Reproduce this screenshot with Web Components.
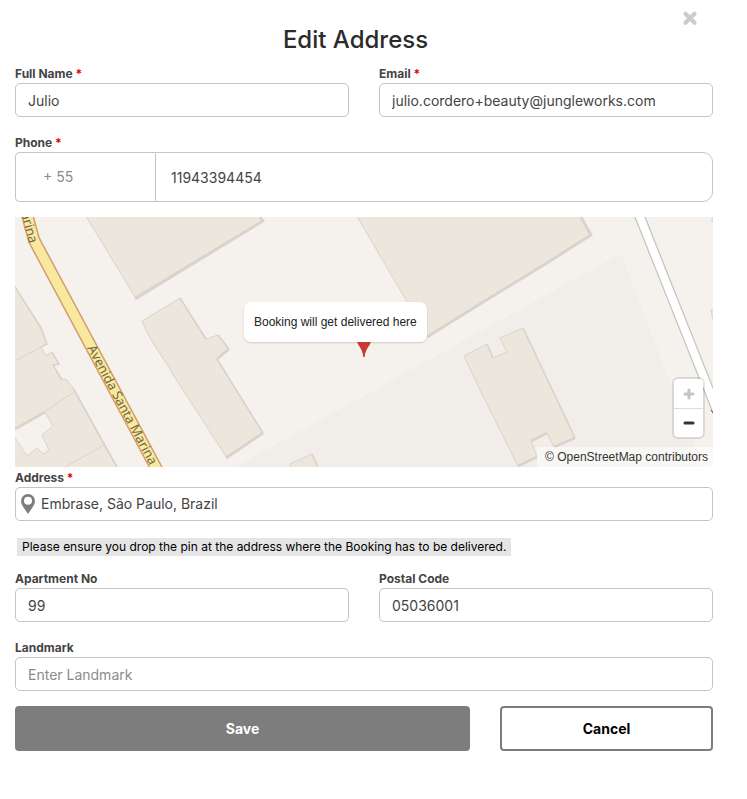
<!DOCTYPE html>
<html lang="en">
<head>
<meta charset="utf-8">
<meta name="viewport" content="width=device-width, initial-scale=1">
<title>Edit Address</title>
<style>
  body { margin: 0; background: #fff; color: #444; font: 14px/20px Inter, "Liberation Sans", sans-serif; }
</style>
</head>
<body>
<address-dialog heading="Edit Address">
  <field-row>
    <form-field label="Full Name" required value="Julio"></form-field>
    <form-field label="Email" type="email" required value="julio.cordero+beauty@jungleworks.com"></form-field>
  </field-row>
  <phone-field label="Phone" required code="+ 55" value="11943394454"></phone-field>
  <map-section>
    <delivery-map>Booking will get delivered here</delivery-map>
    <form-field label="Address" required value="Embrase, São Paulo, Brazil">
      <pin-icon slot="icon"></pin-icon>
    </form-field>
  </map-section>
  <hint-note>Please ensure you drop the pin at the address where the Booking has to be delivered.</hint-note>
  <field-row>
    <form-field label="Apartment No" value="99"></form-field>
    <form-field label="Postal Code" value="05036001"></form-field>
  </field-row>
  <form-field label="Landmark" placeholder="Enter Landmark"></form-field>
  <action-bar>
    <action-button variant="primary">Save</action-button>
    <action-button variant="outline">Cancel</action-button>
  </action-bar>
</address-dialog>

<script>
const define = (name, render) => customElements.define(name, class extends HTMLElement {
  constructor() { super(); this.attachShadow({ mode: "open" }); }
  connectedCallback() { this.shadowRoot.innerHTML = render(this); }
});
const attr = (el, name) => el.getAttribute(name) || "";
const star = el => el.hasAttribute("required") ? ' <span class="star">*</span>' : "";
const fieldStyles = `
  * { box-sizing: border-box; }
  label { display: block; font-size: 12px; line-height: 16px; font-weight: 700; margin-bottom: 1px; }
  .star { color: #e60000; }
  input { font: inherit; color: inherit; background: none; outline: none; min-width: 0; margin: 0; }
  input::placeholder { color: #8c8c8c; opacity: 1; }
`;

define("address-dialog", el => `
  <style>
    :host { display: block; position: relative; padding: 25px 34px 48px 15px; }
    h1 { margin: 0 17px 11px 0; font-size: 24px; line-height: 30px; font-weight: 500; color: #2b2b2d; text-align: center; }
    .close { position: absolute; top: 10px; right: 49px; width: 16px; height: 16px; padding: 0; border: 0; background: none; }
    .close svg { display: block; }
    form { display: flex; flex-direction: column; }
    ::slotted(*) { margin-bottom: 18px; }
    ::slotted(phone-field) { margin-bottom: 15px; }
    ::slotted(map-section) { margin-bottom: 17px; }
    ::slotted(hint-note) { margin-bottom: 15px; }
    ::slotted(form-field) { margin-bottom: 15px; }
    ::slotted(action-bar) { margin-bottom: 0; }
  </style>
  <button class="close" type="button" aria-label="Close">
    <svg width="16" height="16" viewBox="0 0 16 16"><path d="M3.5 3.8l9 9M12.5 3.8l-9 9" stroke="#ccc" stroke-width="4.2" stroke-linecap="round"/></svg>
  </button>
  <h1>${attr(el, "heading")}</h1>
  <form><slot></slot></form>`);

define("field-row", () => `
  <style>:host { display: grid; grid-template-columns: 1fr 1fr; gap: 30px; }</style><slot></slot>`);

define("map-section", () => `
  <style>:host { display: flex; flex-direction: column; gap: 3px; }</style><slot></slot>`);

define("form-field", el => `
  <style>${fieldStyles}
    :host { display: block; min-width: 0; }
    .box { display: flex; align-items: center; height: 34px; border: 1px solid #c4c4c4; border-radius: 5px; }
    input { flex: 1; height: 32px; border: 0; padding: 0 12px; }
    .iconed input { padding: 0 12px 2px 5px; }
    ::slotted([slot=icon]) { margin-left: 4px; }
  </style>
  <label for="field">${attr(el, "label")}${star(el)}</label>
  <div class="box ${el.querySelector("[slot=icon]") ? "iconed" : ""}">
    <slot name="icon"></slot>
    <input id="field" type="${attr(el, "type") || "text"}" value="${attr(el, "value")}" placeholder="${attr(el, "placeholder")}">
  </div>`);

define("phone-field", el => `
  <style>${fieldStyles}
    :host { display: block; }
    .box { display: grid; grid-template-columns: 140px 1fr; height: 50px; }
    input { border: 1px solid #c4c4c4; padding: 2px 15px 0; border-radius: 0 10px 10px 0; }
    .code { border-right: 0; border-radius: 5px 0 0 5px; padding: 0 12px 0 27px; color: #8c8c8c; }
  </style>
  <label for="number">${attr(el, "label")}${star(el)}</label>
  <div class="box">
    <input class="code" aria-label="Country code" value="${attr(el, "code")}">
    <input id="number" type="tel" value="${attr(el, "value")}">
  </div>`);

define("pin-icon", () => `
  <style>:host { display: block; width: 16px; height: 20px; } svg { display: block; }</style>
  <svg width="16" height="20" viewBox="0 0 16 20"><path fill="#7d7d7d" fill-rule="evenodd" d="M8 0a7 7 0 0 0-7 7c0 4.700 4.500 8.500 7 13 2.500-4.500 7-8.300 7-13a7 7 0 0 0-7-7zm0 2.800a4 4 0 1 1 0 8 4 4 0 0 1 0-8z"/></svg>`);

define("hint-note", () => `
  <style>:host { display: block; align-self: flex-start; margin-left: 2px; padding: 0 5px; background: #e5e5e5; color: #000; font-size: 12px; line-height: 18px; }</style><slot></slot>`);

define("action-bar", () => `
  <style>:host { display: grid; grid-template-columns: 455fr 213fr; gap: 30px; }</style><slot></slot>`);

define("action-button", el => `
  <style>
    :host { display: block; }
    button { width: 100%; height: 45px; border: 2px solid #7d7d7d; border-radius: 4px; font: inherit; font-weight: 700; padding: 0; }
    .primary { background: #7d7d7d; color: #fff; }
    .outline { background: #fff; color: #000; }
  </style>
  <button type="button" class="${attr(el, "variant")}"><slot></slot></button>`);

define("delivery-map", () => `
  <style>
    :host { display: block; position: relative; height: 250px; overflow: hidden; font-family: "Liberation Sans", Arial, sans-serif; font-size: 12px; color: #333; }
    .tiles { display: block; width: 100%; height: 100%; }
    .marker { position: absolute; left: calc(50% - 120px); top: 85px; }
    .marker svg { display: block; margin-left: 113px; }
    .tip { background: #fff; border-radius: 7px; padding: 0 10px; line-height: 40px; white-space: nowrap; color: #222; box-shadow: 0 1px 2px rgba(0,0,0,.15); }
    .zoom { position: absolute; right: 8px; bottom: 28px; display: flex; flex-direction: column; border: 2px solid rgba(0,0,0,.1); border-radius: 6px; background: #fff; background-clip: padding-box; }
    .zoom button { width: 29px; height: 29px; padding: 0; border: 0; background: none; display: grid; place-items: center; }
    .zoom button + button { border-top: 1px solid #ddd; }
    .credit { position: absolute; right: 0; bottom: 0; padding: 0 5px 0 8px; line-height: 20px; background: rgba(255,255,255,.5); }
  </style>
  <svg class="tiles" viewBox="15 217 698 250" preserveAspectRatio="xMidYMid slice" role="img" aria-label="Map of Avenida Santa Marina">
    <rect x="15" y="217" width="698" height="250" fill="#f5f2ed"/>
    <path d="M621 253.500L234 467.500H702L673 390z" fill="#f1eeea"/>
    <g fill="#ede6dc" stroke="#d8d4cd" stroke-width="1">
      <path d="M84 213L135 297L263 220L258 212z"/>
      <path d="M142 321L180 298L206 339L218 335L229 349L217 359L250 413L263 433L227 458L172 373L170 369L153 343L146 330z"/>
      <path d="M10 279L41 328L47 344L41 347L46 356L52 352L59 364L53 365L62 380L66 379L73 388L104 445L119 470H10z"/>
      <path d="M355 213L427 336L480 303L547 262L591 234L579 212z"/>
      <path d="M464 356L487 344L493 358L507 352L500 338L523 328L575 438L554 447L547 433L531 441L537 457L518 466L480 390z"/>
      <path d="M290 470V464L312 454L319 470z"/>
      <path d="M712 214V222H718V214zM711 310L713 320H718V308z"/>
    </g>
    <path d="M12 431L45 412L53 426L42 435L49 450L43 454L37 448L27 456L12 433z" fill="#f5f2ed" stroke="#d8d4cd"/>
    <g fill="none" stroke="#d8d4cd">
      <path d="M15 361L41 347M45 411L74 392M65 467L104 445"/>
      <g stroke-width="2.800">
        <path d="M135 299L263 221L260 217M427 337L472 309L480 304L547 263L591 235L581 217M15 429L45 412M226 458L263 433M217 359L229 349M531 441L547 433M518 466L537 457M554 447L575 438"/>
      </g>
      <path stroke-width="1.700" d="M15 287L41 328L47 344L41 347M52 352L59 364L53 365L62 380M73 388L117 467M180 298L206 339M218 335L229 349M217 359L263 433M487 344L493 358M523 328L575 438M312 454L318 467"/>
    </g>
    <path d="M636 207L720 418" fill="none" stroke="#c4c2bf" stroke-width="10.500"/>
    <path d="M636 207L720 418" fill="none" stroke="#fff" stroke-width="8"/>
    <path d="M711 410l3 4" stroke="#555"/>
    <path d="M25 207L34 240L161 477" fill="none" stroke="#d89b6c" stroke-width="12.500"/>
    <path d="M25 207L34 240L161 477" fill="none" stroke="#f9e99f" stroke-width="9.500"/>
    <path id="street" d="M87 348L157 479" fill="none"/>
    <path id="street-top" d="M13 184L30 246" fill="none"/>
    <g font-family="Noto Sans, sans-serif" font-size="13" fill="#6e6842">
      <text><textPath href="#street">Avenida Santa Marina</textPath></text>
      <text text-anchor="end"><textPath href="#street-top" startOffset="62">arina</textPath></text>
    </g>
  </svg>
  <div class="marker">
    <div class="tip"><slot></slot></div>
    <svg width="14" height="15" viewBox="0 0 14 15"><path d="M0 0H14C12 5 8 8 7.800 15H6.200C6 8 2 5 0 0z" fill="#c73c32"/></svg>
  </div>
  <div class="zoom">
    <button type="button" aria-label="Zoom in" disabled><svg width="12" height="12"><path d="M6 2v8M2 6h8" stroke="#c4c4c4" stroke-width="3" stroke-linecap="round"/></svg></button>
    <button type="button" aria-label="Zoom out"><svg width="12" height="12"><path d="M2 6h8" stroke="#333" stroke-width="3" stroke-linecap="round"/></svg></button>
  </div>
  <div class="credit">© OpenStreetMap contributors</div>`);
</script>
</body>
</html>
